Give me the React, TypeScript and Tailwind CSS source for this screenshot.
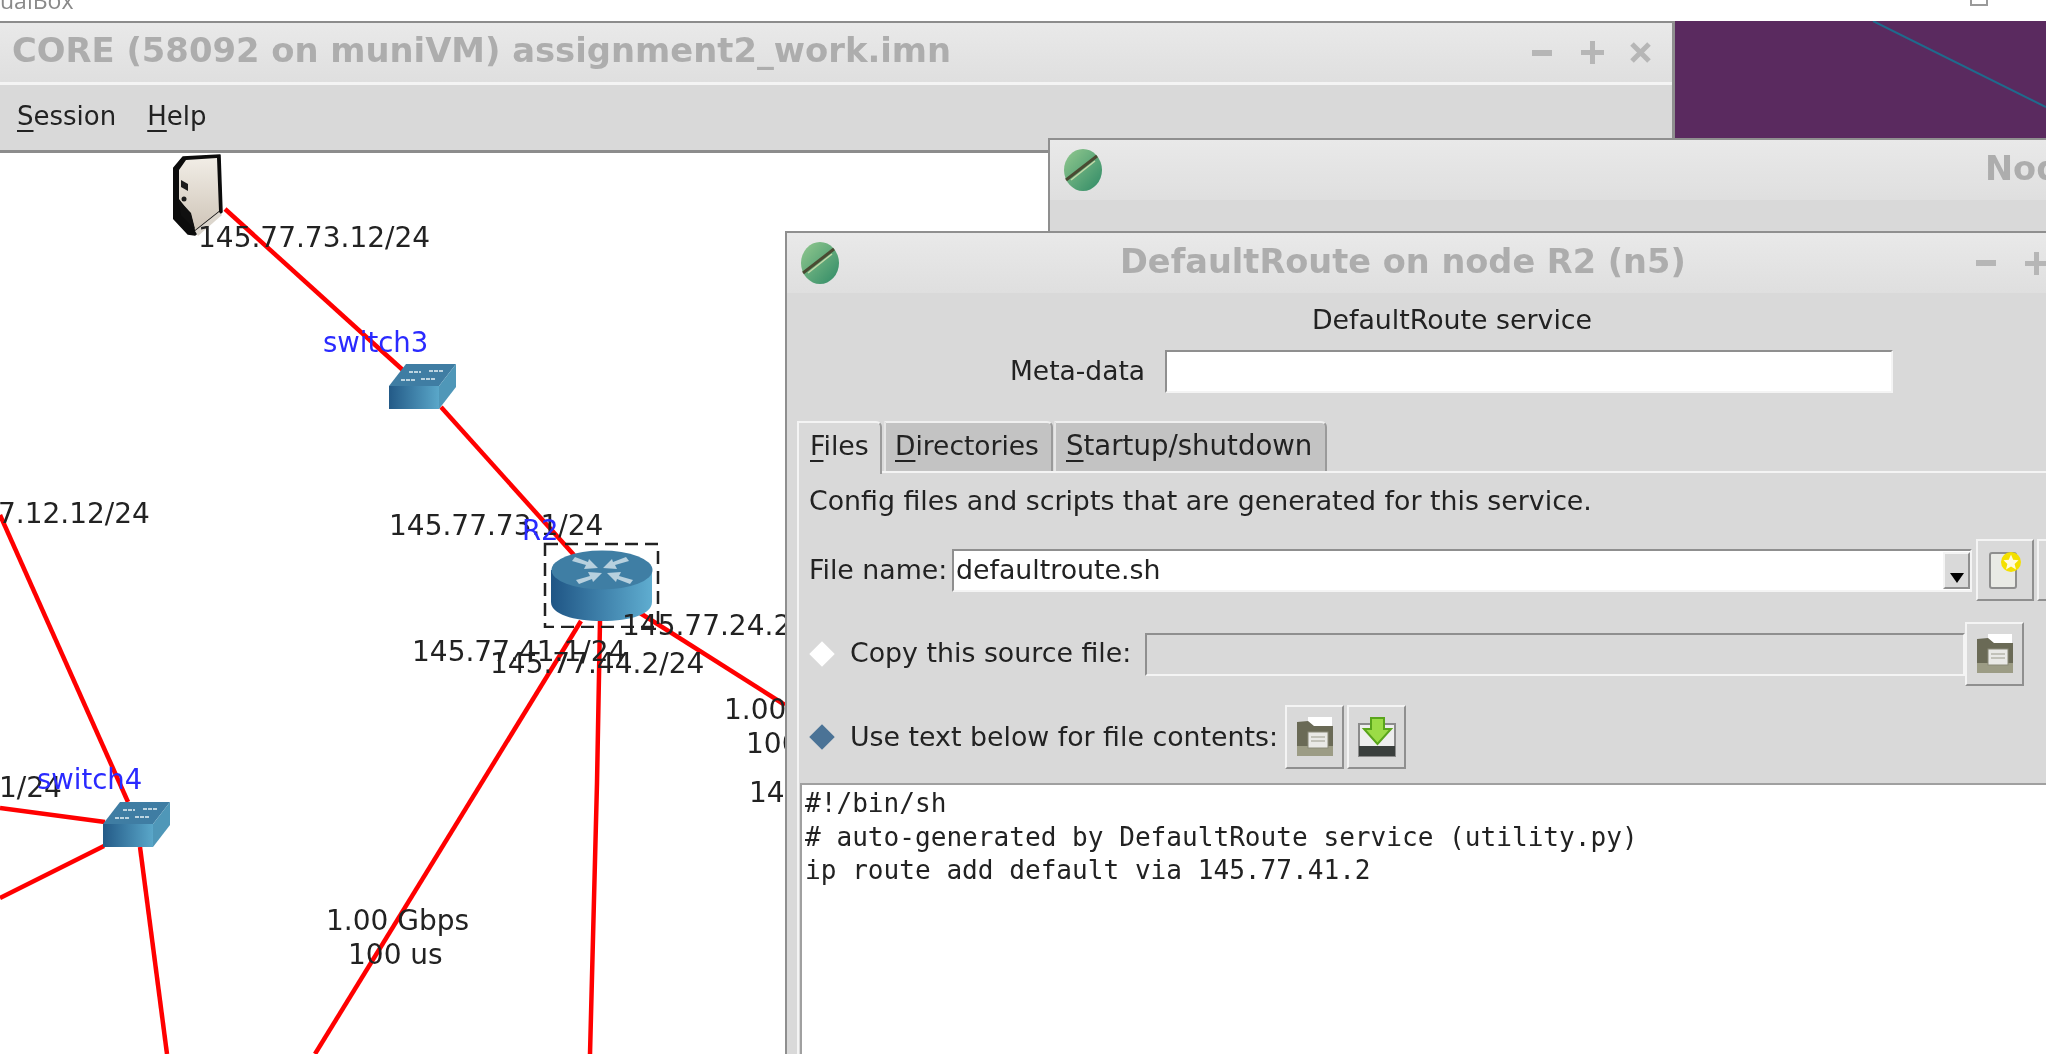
import React from 'react';

const raised = 'border-2 border-t-[#f4f4f4] border-l-[#f4f4f4] border-r-[#8f8f8f] border-b-[#8f8f8f]';
const sunken = 'border-2 border-t-[#8f8f8f] border-l-[#8f8f8f] border-r-[#f4f4f4] border-b-[#f4f4f4]';
const label = "absolute whitespace-nowrap text-[28px] leading-[32px] text-[#222222]";
const nodeName = "absolute whitespace-nowrap text-[27.5px] leading-[32px] text-[#2a2aff]";
const titleText = '-mt-[3px] font-bold leading-[40px] text-[#adadad] whitespace-nowrap';
const routerArrow = 'M21 11 L24 7 L37 12 L38 9 L47 18 L33 19 L35 15 Z';

function TkIcon() {
	return (
		<svg width="40" height="44" viewBox="0 0 40 44" className="shrink-0">
			<defs>
				<linearGradient id="tk" x1="0" y1="0" x2="1" y2="1">
					<stop offset="0" stopColor="#93c98f" />
					<stop offset="1" stopColor="#2f8a66" />
				</linearGradient>
			</defs>
			<ellipse cx="20" cy="22" rx="19" ry="21" fill="url(#tk)" />
			<path d="M3 32 L34 8" stroke="#4a4a32" strokeWidth="3" />
			<path d="M8 32 L32 13" stroke="#c5d8a8" strokeWidth="1.5" />
		</svg>
	);
}

function FolderIcon() {
	return (
		<svg width="38" height="40" viewBox="0 0 38 40">
			<rect x="12" y="0" width="24" height="10" fill="#ffffff" />
			<path d="M1 5 L12 4 L18 9 L37 9 L37 39 L1 39 Z" fill="#6a6a56" />
			<rect x="1" y="29" width="36" height="10" fill="#9c9c85" />
			<rect x="12" y="15" width="20" height="16" fill="#e9e9e6" stroke="#8a8a78" />
			<path d="M15 20 H29 M15 24 H29" stroke="#b5b5aa" strokeWidth="1.5" />
		</svg>
	);
}

function SaveIcon() {
	return (
		<svg width="38" height="40" viewBox="0 0 38 40">
			<rect x="1" y="7" width="36" height="32" fill="#eeeeee" stroke="#8b8b8b" strokeWidth="2" />
			<rect x="1" y="29" width="36" height="10" fill="#3a3f3d" />
			<path d="M13 1 H26 V12 H33 L19.5 27 L6 12 H13 Z" fill="#9bdc46" stroke="#5aa51c" strokeWidth="2" />
		</svg>
	);
}

function NewIcon() {
	return (
		<svg width="34" height="40" viewBox="0 0 34 40">
			<rect x="2" y="3" width="26" height="35" rx="2" fill="#e9eae5" stroke="#8e8e8e" strokeWidth="2" />
			<circle cx="23" cy="12" r="10" fill="#f4e000" />
			<path d="M23 4.5 L25.2 9.8 L30.5 10.3 L26.6 14 L28 19.5 L23 16.6 L18 19.5 L19.4 14 L15.5 10.3 L20.8 9.8 Z" fill="#fffbe0" />
		</svg>
	);
}

function ServerIcon() {
	return (
		<svg width="52" height="84" viewBox="0 0 52 84" className="absolute left-[173px] top-0">
			<defs>
				<linearGradient id="srv" x1="0" y1="0" x2="0" y2="1">
					<stop offset="0" stopColor="#f1ede6" />
					<stop offset="1" stopColor="#cfc5b8" />
				</linearGradient>
			</defs>
			<path d="M0 16 L10 4 L47 2 L49 59 L22 82 L15 81 L0 65 Z" fill="#0c0c0c" stroke="#0c0c0c" strokeWidth="1.5" strokeLinejoin="round" />
			<path d="M6 17 L13 7 L44 5 L46 58 L22 77 L18 62 L6 46 Z" fill="url(#srv)" />
			<path d="M8 27 L15 31 L15 38 L8 34 Z" fill="#1c1c1c" />
			<circle cx="11" cy="46" r="2.5" fill="#1c1c1c" />
			<path d="M5 46 L18 60 L22 76 L8 62 Z" fill="#101010" />
			<path d="M22 78 L46 59 L49 62 L25 83 Z" fill="#dcd6cd" />
		</svg>
	);
}

function SwitchIcon({ className }: { className: string }) {
	return (
		<svg width="68" height="46" viewBox="0 0 68 46" className={className}>
			<defs>
				<linearGradient id="sw" x1="0" y1="0" x2="1" y2="0">
					<stop offset="0" stopColor="#235a87" />
					<stop offset="1" stopColor="#5aa7c9" />
				</linearGradient>
			</defs>
			<path d="M0 22 L17 0 L67 0 L50 22 Z" fill="#3f7da3" />
			<path d="M50 22 L67 0 L67 23 L50 45 Z" fill="#4f97b8" />
			<rect x="0" y="22" width="50" height="23" fill="url(#sw)" />
			<path d="M20 8 H32 M40 7 H54 M12 16 H26 M32 15 H46" stroke="#bcd4e0" strokeWidth="2" strokeDasharray="4 1" />
		</svg>
	);
}

function RouterIcon() {
	return (
		<svg width="102" height="72" viewBox="0 0 102 72" className="absolute left-[551px] top-[397px]">
			<defs>
				<linearGradient id="rt" x1="0" y1="0" x2="1" y2="0">
					<stop offset="0" stopColor="#1f5585" />
					<stop offset="1" stopColor="#5fadd0" />
				</linearGradient>
			</defs>
			<path d="M0 20 V52 C0 64 22 71 51 71 C80 71 101 64 101 52 V20 Z" fill="url(#rt)" />
			<ellipse cx="51" cy="20" rx="50.5" ry="19.5" fill="#3f7ea4" />
			<g fill="#b7d0de">
				<path d={routerArrow} />
				<path d={routerArrow} transform="matrix(-1 0 0 1 99 0)" />
				<path d={routerArrow} transform="matrix(1 0 0 -1 4 41)" />
				<path d={routerArrow} transform="matrix(-1 0 0 -1 103 41)" />
			</g>
		</svg>
	);
}

function MinMax() {
	return (
		<>
			<span className="block h-[6px] w-[20px] bg-[#b6b6b6]" />
			<span className="relative ml-[29px] block h-[23px] w-[23px]">
				<span className="absolute left-0 top-[9px] h-[5px] w-[23px] bg-[#b6b6b6]" />
				<span className="absolute left-[9px] top-0 h-[23px] w-[5px] bg-[#b6b6b6]" />
			</span>
		</>
	);
}

function Canvas() {
	return (
		<div className="relative flex-1 overflow-hidden bg-white">
			<svg className="absolute inset-0" width="2046" height="901" viewBox="0 153 2046 901" fill="none" stroke="#ff0000" strokeWidth="4.5">
				<path d="M225 209 L405 372" />
				<path d="M441 407 L574 555" />
				<path d="M581 621 L315 1054" />
				<path d="M600 621 L597 783 L590 1054" />
				<path d="M640 613 L785 705" />
				<path d="M0 515 L128 802" />
				<path d="M0 808 L105 822" />
				<path d="M0 898 L104 846" />
				<path d="M140 847 L167 1054" />
			</svg>
			<ServerIcon />
			<SwitchIcon className="absolute left-[389px] top-[211px]" />
			<SwitchIcon className="absolute left-[103px] top-[649px]" />
			<RouterIcon />
			<svg className="absolute left-[543px] top-[389px]" width="118" height="86" viewBox="0 0 118 86" fill="none">
				<rect x="2" y="2" width="113" height="83" stroke="#222222" strokeWidth="2.5" strokeDasharray="13 7" />
			</svg>

			<span className={`${label} left-[198px] top-[69px]`}>145.77.73.12/24</span>
			<span className={`${nodeName} left-[323px] top-[173px]`}>switch3</span>
			<span className={`${label} left-[389px] top-[357px]`}>145.77.73.1/24</span>
			<span className={`${nodeName} left-[522px] top-[361px]`}>R2</span>
			<span className={`${label} left-[622px] top-[457px]`}>145.77.24.2/24</span>
			<span className={`${label} left-[412px] top-[483px]`}>145.77.41.1/24</span>
			<span className={`${label} left-[490px] top-[495px]`}>145.77.44.2/24</span>
			<span className={`${label} -left-[2px] top-[345px]`}>7.12.12/24</span>
			<span className={`${label} -left-[1px] top-[619px]`}>1/24</span>
			<span className={`${nodeName} left-[37px] top-[610px]`}>switch4</span>
			<span className={`${label} left-[326px] top-[752px]`}>1.00 Gbps</span>
			<span className={`${label} left-[348px] top-[786px]`}>100 us</span>
			<span className={`${label} left-[724px] top-[541px]`}>1.00 Gbps</span>
			<span className={`${label} left-[746px] top-[575px]`}>100 us</span>
			<span className={`${label} left-[749px] top-[624px]`}>145.77.24.1/24</span>
		</div>
	);
}

function NodeWindow() {
	return (
		<div className="absolute left-[1048px] top-[138px] h-[94px] w-[1100px] border-l-2 border-t-2 border-[#8f8f8f] bg-[#d9d9d9]">
			<div className="flex h-[60px] items-center bg-gradient-to-b from-[#e9e9e9] to-[#dfdfdf] pl-[13px]">
				<TkIcon />
				<span className={`${titleText} ml-[882px] text-[33.6px]`}>Node R2 (n5) services</span>
			</div>
		</div>
	);
}

function Tabs() {
	return (
		<div className="ml-[10px] flex h-[50px] items-start leading-[46px] text-[#222222]">
			<div className="relative z-10 h-[53px] w-[85px] rounded-tr-[6px] border-l-2 border-r-2 border-t-2 border-l-[#f4f4f4] border-r-[#9a9a9a] border-t-[#f4f4f4] bg-[#d9d9d9] pl-[11px] text-[26.8px]">
				<span className="underline underline-offset-[5px]">F</span>iles
			</div>
			<div className="ml-[2px] h-[50px] w-[169px] rounded-tr-[6px] border-l-2 border-r-2 border-t-2 border-l-[#e6e6e6] border-r-[#9a9a9a] border-t-[#f0f0f0] bg-[#c3c3c3] pl-[9px] text-[26.5px]">
				<span className="underline underline-offset-[5px]">D</span>irectories
			</div>
			<div className="ml-[1px] h-[50px] w-[273px] rounded-tr-[6px] border-l-2 border-r-2 border-t-2 border-l-[#e6e6e6] border-r-[#9a9a9a] border-t-[#f0f0f0] bg-[#c3c3c3] pl-[10px] text-[27.6px]">
				<span className="underline underline-offset-[5px]">S</span>tartup/shutdown
			</div>
		</div>
	);
}

function DefaultRouteDialog() {
	return (
		<div className="absolute left-[785px] top-[231px] flex h-[900px] w-[1332px] flex-col border-l-2 border-t-2 border-[#8f8f8f] bg-[#d9d9d9] text-[26.8px] leading-[34px] text-[#222222]">
			<div className="flex h-[60px] shrink-0 items-center bg-gradient-to-b from-[#e9e9e9] to-[#dfdfdf] pl-[13px]">
				<TkIcon />
				<span className={`${titleText} ml-[280px] text-[33.6px]`}>DefaultRoute on node R2 (n5)</span>
				<span className="ml-[290px] flex items-center">
					<MinMax />
				</span>
			</div>

			<div className="mt-[10px] text-center">DefaultRoute service</div>

			<div className="mt-[13px] flex h-[43px] items-center">
				<span className="-mt-[2px] ml-[223px] w-[155px] text-[26.5px]">Meta-data</span>
				<div className={`${sunken} h-[43px] w-[728px] bg-white`} />
			</div>

			<div className="mt-[28px]">
				<Tabs />
			</div>

			<div className="ml-[10px] flex-1 border-l-2 border-t-2 border-[#f4f4f4]">
				<div className="mt-[11px] pl-[10px]">Config files and scripts that are generated for this service.</div>

				<div className="mt-[21px] flex h-[62px] items-center pl-[10px]">
					<span className="w-[143px]">File name:</span>
					<div className={`${sunken} flex h-[43px] w-[1020px] items-center justify-between bg-white pl-[2px]`}>
						<span>defaultroute.sh</span>
						<span className={`${raised} flex h-[37px] w-[27px] items-end justify-center bg-[#d9d9d9] pb-[4px]`}>
							<span className="h-0 w-0 border-l-[7px] border-r-[7px] border-t-[10px] border-l-transparent border-r-transparent border-t-black" />
						</span>
					</div>
					<button className={`${raised} ml-[4px] flex h-[62px] w-[58px] shrink-0 items-center justify-center`}>
						<NewIcon />
					</button>
					<button className={`${raised} ml-[3px] h-[62px] w-[58px] shrink-0`} />
				</div>

				<div className="mt-[21px] flex h-[64px] items-center pl-[10px]">
					<span className="block h-[26px] w-[28px] shrink-0 pl-[4px] pt-[4px]">
						<span className="block h-[18px] w-[18px] rotate-45 bg-white" />
					</span>
					<span className="-mt-[2px] ml-[13px] w-[295px]">Copy this source file:</span>
					<div className={`${sunken} h-[43px] w-[820px]`} />
					<button className={`${raised} flex h-[64px] w-[59px] items-center justify-center`}>
						<FolderIcon />
					</button>
				</div>

				<div className="mt-[19px] flex h-[64px] items-center pl-[10px]">
					<span className="block h-[26px] w-[28px] shrink-0 pl-[4px] pt-[4px]">
						<span className="block h-[18px] w-[18px] rotate-45 bg-[#4b7396]" />
					</span>
					<span className="-mt-[1px] ml-[13px] w-[435px]">Use text below for file contents:</span>
					<button className={`${raised} flex h-[64px] w-[59px] items-center justify-center`}>
						<FolderIcon />
					</button>
					<button className={`${raised} ml-[3px] flex h-[64px] w-[59px] items-center justify-center`}>
						<SaveIcon />
					</button>
				</div>

				<pre className="ml-px mt-[14px] h-[300px] border-l-2 border-t-2 border-[#a0a0a0] bg-white pl-[3px] pt-[2px] font-['DejaVu_Sans_Mono',monospace] text-[26.1px] leading-[33.5px]">
					{'#!/bin/sh\n# auto-generated by DefaultRoute service (utility.py)\nip route add default via 145.77.41.2'}
				</pre>
			</div>
		</div>
	);
}

export default function App() {
	return (
		<div className="relative flex h-[1054px] w-[2046px] flex-col overflow-hidden bg-white font-['DejaVu_Sans',sans-serif] blur-[0.6px]">
			<div className="flex h-[21px] shrink-0 items-start justify-between overflow-hidden">
				<span className="-mt-[14px] font-['Open_Sans',sans-serif] text-[23px] leading-[28px] text-[#8a8a8a]">ualBox</span>
				<span className="-mt-[6px] mr-[58px] h-[12px] w-[18px] border-2 border-[#9a9a9a]" />
			</div>

			<div className="flex h-[117px] shrink-0">
				<div className="h-[132px] w-[1675px] border-r-[3px] border-t-2 border-r-[#8f8f8f] border-t-[#8c8c8c]">
					<div className="flex h-[59px] items-center justify-between bg-gradient-to-b from-[#e9e9e9] to-[#dfdfdf] pl-[12px] pr-[21px]">
						<span className={`${titleText} text-[33.8px]`}>CORE (58092 on muniVM) assignment2_work.imn</span>
						<span className="flex items-center">
							<MinMax />
							<svg className="ml-[26px]" width="21" height="21" viewBox="0 0 21 21">
								<path d="M2 2 L19 19 M19 2 L2 19" stroke="#b6b6b6" strokeWidth="5" />
							</svg>
						</span>
					</div>
					<div className="h-[3px] bg-[#f4f4f4]" />
					<div className="flex h-[68px] items-center gap-[31px] border-b-[3px] border-[#8c8c8c] bg-[#d9d9d9] pl-[17px] text-[26px] text-[#222222]">
						<span className="-mt-[2px]"><span className="underline underline-offset-[5px]">S</span>ession</span>
						<span className="-mt-[2px]"><span className="underline underline-offset-[5px]">H</span>elp</span>
					</div>
				</div>
				<div className="relative flex-1 bg-[#5a2a5f]">
					<svg className="absolute inset-0" width="371" height="117" viewBox="0 0 371 117">
						<path d="M198 0 L371 86" stroke="#1f6a8c" strokeWidth="2" fill="none" />
					</svg>
				</div>
			</div>

			<div className="mt-[15px] flex min-h-0 flex-1">
				<Canvas />
			</div>

			<NodeWindow />
			<DefaultRouteDialog />
		</div>
	);
}
